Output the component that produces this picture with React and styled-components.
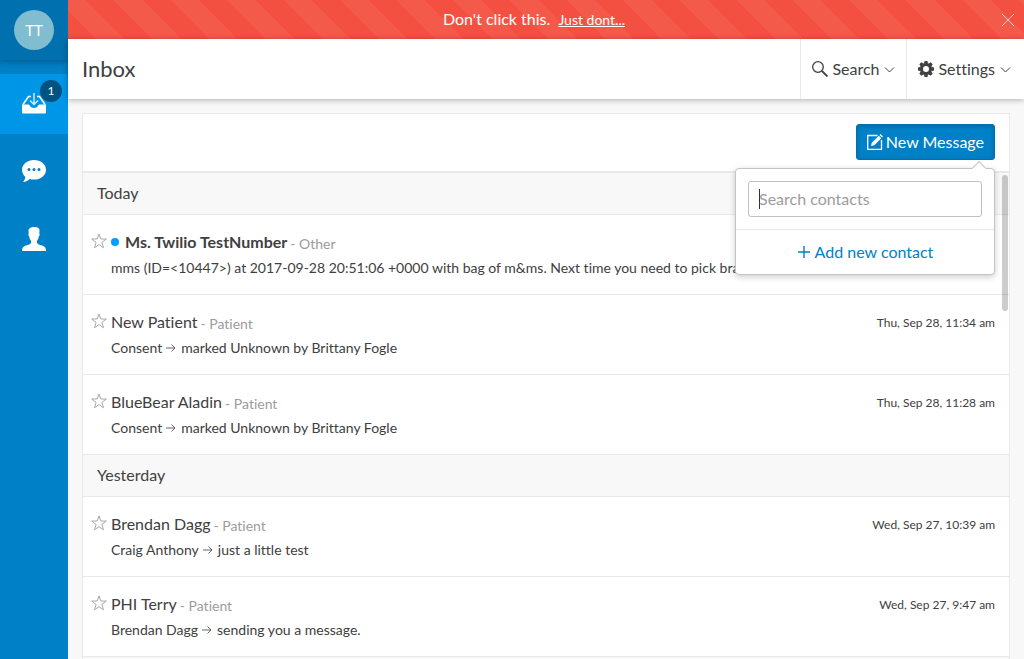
import React from "react";
import styled, { createGlobalStyle } from "styled-components";

const Global = createGlobalStyle`
  *, *::before, *::after { box-sizing: border-box; }
  body {
    margin: 0;
    background: #f8f8f8;
    color: #404040;
    font: 16px/20px Lato, "Liberation Sans", sans-serif;
    font-variant-ligatures: none;
  }
  button, input { font: inherit; color: inherit; }
  button { border: 0; padding: 0; background: none; cursor: pointer; }
  svg { display: block; flex: none; }
`;

const Shell = styled.div`
  display: flex;
  height: 100vh;
  overflow: hidden;
`;

const Sidebar = styled.nav`
  flex: none;
  width: 68px;
  background: #0080c7;
`;

const AvatarBox = styled.div`
  display: flex;
  justify-content: center;
  align-items: center;
  height: 60px;
  margin-bottom: 14px;
  background: #0070ae;
  box-shadow: 0 2px 6px rgba(0, 0, 0, 0.3);
`;

const Avatar = styled.button`
  width: 40px;
  height: 40px;
  border-radius: 50%;
  background: #80bdd0;
  color: #fff;
  font-size: 15px;
`;

const NavItem = styled.a`
  display: flex;
  position: relative;
  justify-content: center;
  align-items: center;
  height: 60px;
  margin-bottom: 8px;
  padding-bottom: 2px;
  background: ${(p) => (p.$active ? "#0096e8" : "transparent")};
  color: #fff;
`;

const Badge = styled.span`
  position: absolute;
  top: 6px;
  right: 6px;
  width: 22px;
  border-radius: 50%;
  background: #005280;
  font-size: 12px;
  line-height: 22px;
  text-align: center;
`;

const Main = styled.div`
  display: flex;
  flex: 1;
  flex-direction: column;
  min-width: 0;
`;

const Banner = styled.div`
  display: flex;
  flex: none;
  align-items: center;
  height: 39px;
  padding: 0 8px 0 0;
  background: repeating-linear-gradient(45deg, #f45042 0 20px, #f45a4a 20px 40px);
  color: #fff;
`;

const BannerText = styled.p`
  flex: 1;
  margin: 0;
  text-align: center;
`;

const BannerLink = styled.a`
  margin-left: 4px;
  color: #fff;
  font-size: 14px;
`;

const CloseButton = styled.button`
  color: #fff;
  opacity: 0.7;
`;

const Header = styled.header`
  display: flex;
  position: relative;
  flex: none;
  height: 60px;
  padding-right: 2px;
  background: #fff;
  box-shadow: 0 1px 6px rgba(0, 0, 0, 0.3);
`;

const Title = styled.h1`
  flex: 1;
  align-self: center;
  margin: 0;
  padding-left: 14px;
  font-size: 22px;
  font-weight: 400;
  line-height: 28px;
`;

const HeaderButton = styled.button`
  display: flex;
  align-items: center;
  gap: 4px;
  padding: 0 11px;
  border-left: 1px solid #e9e9e9;
`;

const Card = styled.main`
  display: flex;
  flex: 1;
  flex-direction: column;
  min-height: 0;
  margin: 14px 14px 0;
  border: 1px solid #e9e9e9;
  border-bottom: 0;
  background: #fff;
`;

const Toolbar = styled.div`
  display: flex;
  flex: none;
  justify-content: flex-end;
  padding: 10px 14px 11px;
  border-bottom: 2px solid #e9e9e9;
`;

const Compose = styled.div`
  position: relative;
`;

const PrimaryButton = styled.button`
  display: flex;
  align-items: center;
  gap: 3px;
  height: 36px;
  padding: 0 10px;
  border: 1px solid #006fad;
  border-radius: 3px;
  background: #0080c7;
  color: #fff;
  box-shadow: inset 0 1px 4px rgba(0, 0, 0, 0.2);
`;

const Popover = styled.div`
  position: absolute;
  z-index: 2;
  top: 44px;
  right: 0;
  width: 260px;
  border: 1px solid #c4c4c4;
  border-radius: 4px;
  background: #fff;
  box-shadow: 0 2px 6px rgba(0, 0, 0, 0.2);

  &::before {
    content: "";
    position: absolute;
    top: -6px;
    right: 10px;
    width: 10px;
    height: 10px;
    border: solid #c4c4c4;
    border-width: 1px 0 0 1px;
    background: #fff;
    transform: rotate(45deg);
  }
`;

const SearchArea = styled.div`
  padding: 12px;
  border-bottom: 1px solid #e9e9e9;
`;

const SearchInput = styled.input`
  display: block;
  width: 100%;
  height: 36px;
  padding: 0 10px 2px;
  border: 1px solid #c0c0c0;
  border-radius: 3px;
  outline: 0;
  background: #fff;

  &::placeholder { color: #9c9c9c; opacity: 1; }

  /* full-height caret while the field is empty */
  &:placeholder-shown {
    background: linear-gradient(#303030, #303030) 10px center / 1px 20px no-repeat #fff;
    caret-color: transparent;
  }
`;

const AddButton = styled.button`
  display: flex;
  justify-content: center;
  align-items: center;
  gap: 4px;
  width: 100%;
  height: 44px;
  color: #0080c7;
`;

const List = styled.div`
  position: relative;
  flex: 1;
  min-height: 0;
  overflow: hidden;
  background: #f8f8f8;
`;

const Scrollbar = styled.div`
  position: absolute;
  top: 2px;
  right: 1px;
  width: 6px;
  height: 136px;
  border-radius: 3px;
  background: rgba(0, 0, 0, 0.2);
`;

const SectionTitle = styled.h2`
  margin: 0;
  padding: 10px 14px 11px;
  border-bottom: 1px solid #e9e9e9;
  font-size: 16px;
  font-weight: 400;
`;

const Row = styled.article`
  display: flex;
  align-items: flex-start;
  gap: 4px;
  height: 80px;
  padding: 17px 14px 0 8px;
  border-bottom: 1px solid #e9e9e9;
  background: #fff;
`;

const StarButton = styled.button`
  margin-top: 1px;
  color: #a8a8a8;
`;

const RowBody = styled.div`
  flex: 1;
  min-width: 0;
`;

const NameLine = styled.div`
  display: flex;
  gap: 3px;
  height: 20px;
  margin-bottom: 6px;
`;

const Dot = styled.span`
  align-self: center;
  width: 8px;
  height: 8px;
  margin-right: 3px;
  border-radius: 50%;
  background: #009fff;
`;

const Name = styled.span`
  font-weight: ${(p) => (p.$unread ? 700 : 400)};
`;

const Kind = styled.span`
  padding-top: 2px;
  color: #9c9c9c;
  font-size: 14px;
`;

const Message = styled.p`
  display: flex;
  align-items: center;
  gap: 4px;
  margin: 0;
  overflow: hidden;
  font-size: 14px;
  white-space: nowrap;
`;

const When = styled.time`
  margin-top: 1px;
  font-size: 12px;
`;

const Stroke = ({ w = 16, h = w, box, sw = 1, children }) => (
  <svg width={w} height={h} viewBox={box || `0 0 ${w} ${h}`} fill="none" stroke="currentColor" strokeWidth={sw} aria-hidden="true">
    {children}
  </svg>
);

const InboxIcon = () => (
  <svg width="24" height="24" viewBox="0 -2 24 24" aria-hidden="true">
    <path d="M9 3.500H6.500L1 11.500M23 11.500L17.500 3.500H15" fill="none" stroke="#fff" strokeWidth="1.500" />
    <path d="M0 11.500h6.500c1.500 0 1.500 3.500 5.500 3.500s4-3.500 5.500-3.500H24v8a1 1 0 0 1-1 1H1a1 1 0 0 1-1-1z" fill="#fff" />
    <path d="M12 0v11M8 7.500l4 4 4-4" fill="none" stroke="#fff" strokeOpacity="0.8" strokeWidth="1.500" />
  </svg>
);

const ChatIcon = () => (
  <svg width="24" height="22" viewBox="0 0 24 22" aria-hidden="true">
    <path d="M12 0C5.400 0 0 4.300 0 9.700c0 3 1.500 5.400 3.200 7.100.2 2-.9 3.900-2.200 5.200 2.800-.1 5-1.200 6.600-2.900 1.400.4 2.900.5 4.400.5 6.600 0 12-4.300 12-9.900S18.600 0 12 0z" fill="#fff" />
    <g fill="#0080c7"><circle cx="7" cy="9.500" r="1.500" /><circle cx="12" cy="9.500" r="1.500" /><circle cx="17" cy="9.500" r="1.500" /></g>
  </svg>
);

const PersonIcon = () => (
  <svg width="24" height="24" viewBox="0 0 24 24" fill="#fff" aria-hidden="true">
    <path d="M12 0c3 0 5.500.5 5.500 3.500 0 1-.2 2-.2 3 .7.600.3 2.500-.5 3-.3 2-1 3.200-1.800 4.200v2c.5 1.800 2.500 2 5 2.800C22.500 19.400 24 20.200 24 24H0c0-3.800 1.500-4.600 4-5.500 2.500-.8 4.500-1 5-2.800v-2c-.8-1-1.500-2.200-1.800-4.200-.8-.5-1.200-2.400-.5-3 0-1-.2-2-.2-3C6.500 1.500 9 0 12 0z" />
  </svg>
);

const SearchIcon = () => (
  <Stroke sw={1.3}><circle cx="6" cy="6" r="5.300" /><path d="M10 10l5.500 5.500" strokeWidth="1.800" /></Stroke>
);

const GearIcon = () => (
  <svg width="16" height="16" viewBox="-8 -8 16 16" aria-hidden="true">
    <circle r="4.500" fill="none" stroke="currentColor" strokeWidth="3" />
    {[0, 45, 90, 135, 180, 225, 270, 315].map((a) => (
      <path key={a} d="M-2.200-5.300L-1.400-8h2.800l.8 2.700z" fill="currentColor" transform={`rotate(${a})`} />
    ))}
  </svg>
);

const ChevronIcon = () => <Stroke w={12} h={8} box="-1 -2 12 8"><path d="M1 .5l4.500 4.500L10 .5" /></Stroke>;
const CloseIcon = () => <Stroke w={16} h={14}><path d="M2 1l12 12M14 1L2 13" /></Stroke>;
const PlusIcon = () => <Stroke w={14} sw={1.4}><path d="M7 1v12M1 7h12" /></Stroke>;
const ArrowIcon = () => <Stroke w={11} h={8}><path d="M0 4h9M5.500.5L9 4 5.500 7.500" strokeOpacity="0.8" /></Stroke>;
const StarIcon = () => (
  <Stroke><path d="M8 1l1.800 5H15.300l-4.400 3.400 1.600 5.400L8 11.600l-4.500 3.200 1.600-5.400L.7 6h5.500z" /></Stroke>
);
const ComposeIcon = () => (
  <Stroke>
    <path d="M10.500 1.500H.7v13.800h13.800V6" strokeWidth="1.300" />
    <path d="M4 12l.8-3.300 7-7 2.500 2.500-7 7zM12.500 1l1-1L16 2.500l-1 1z" fill="currentColor" stroke="none" />
  </Stroke>
);

const sections = [
  {
    title: "Today",
    rows: [
      { name: "Ms. Twilio TestNumber", kind: "Other", unread: true, text: "mms (ID=<10447>) at 2017-09-28 20:51:06 +0000 with bag of m&ms. Next time you need to pick brac" },
      { name: "New Patient", kind: "Patient", from: "Consent", text: "marked Unknown by Brittany Fogle", when: "Thu, Sep 28, 11:34 am" },
      { name: "BlueBear Aladin", kind: "Patient", from: "Consent", text: "marked Unknown by Brittany Fogle", when: "Thu, Sep 28, 11:28 am" },
    ],
  },
  {
    title: "Yesterday",
    rows: [
      { name: "Brendan Dagg", kind: "Patient", from: "Craig Anthony", text: "just a little test", when: "Wed, Sep 27, 10:39 am" },
      { name: "PHI Terry", kind: "Patient", from: "Brendan Dagg", text: "sending you a message.", when: "Wed, Sep 27, 9:47 am" },
    ],
  },
];

const Conversation = ({ name, kind, unread, from, text, when }) => (
  <Row>
    <StarButton aria-label={`Star ${name}`}><StarIcon /></StarButton>
    <RowBody>
      <NameLine>
        {unread && <Dot />}
        <Name $unread={unread}>{name}</Name>
        <Kind>- {kind}</Kind>
      </NameLine>
      <Message>
        {from && <><span>{from}</span><ArrowIcon /></>}
        <span>{text}</span>
      </Message>
    </RowBody>
    {when && <When>{when}</When>}
  </Row>
);

export default function App() {
  return (
    <Shell>
      <Global />
      <Sidebar>
        <AvatarBox><Avatar>TT</Avatar></AvatarBox>
        <NavItem href="#inbox" $active aria-label="Inbox"><InboxIcon /><Badge>1</Badge></NavItem>
        <NavItem href="#chat" aria-label="Chat"><ChatIcon /></NavItem>
        <NavItem href="#contacts" aria-label="Contacts"><PersonIcon /></NavItem>
      </Sidebar>
      <Main>
        <Banner>
          <BannerText>Don't click this. <BannerLink href="#dont">Just dont...</BannerLink></BannerText>
          <CloseButton aria-label="Close"><CloseIcon /></CloseButton>
        </Banner>
        <Header>
          <Title>Inbox</Title>
          <HeaderButton><SearchIcon />Search<ChevronIcon /></HeaderButton>
          <HeaderButton><GearIcon />Settings<ChevronIcon /></HeaderButton>
        </Header>
        <Card>
          <Toolbar>
            <Compose>
              <PrimaryButton><ComposeIcon />New Message</PrimaryButton>
              <Popover>
                <SearchArea>
                  <SearchInput autoFocus aria-label="Search contacts" placeholder="Search contacts" />
                </SearchArea>
                <AddButton><PlusIcon />Add new contact</AddButton>
              </Popover>
            </Compose>
          </Toolbar>
          <List>
            {sections.map((s) => (
              <section key={s.title}>
                <SectionTitle>{s.title}</SectionTitle>
                {s.rows.map((r) => <Conversation key={r.name} {...r} />)}
              </section>
            ))}
            <Scrollbar />
          </List>
        </Card>
      </Main>
    </Shell>
  );
}
